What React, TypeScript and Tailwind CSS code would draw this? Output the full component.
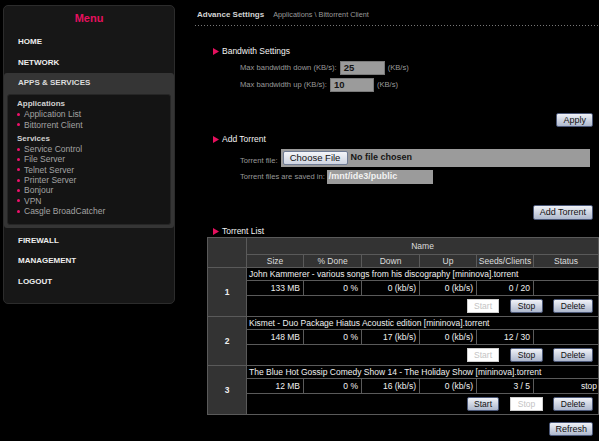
import type { ReactNode } from 'react';

const torrents = [
  {
    id: 1,
    name: 'John Kammerer - various songs from his discography [mininova].torrent',
    size: '133 MB',
    done: '0 %',
    down: '0 (kb/s)',
    up: '0 (kb/s)',
    seeds: '0 / 20',
    status: '',
    canStart: false,
    canStop: true,
  },
  {
    id: 2,
    name: 'Kismet - Duo Package Hiatus Acoustic edition [mininova].torrent',
    size: '148 MB',
    done: '0 %',
    down: '17 (kb/s)',
    up: '0 (kb/s)',
    seeds: '12 / 30',
    status: '',
    canStart: false,
    canStop: true,
  },
  {
    id: 3,
    name: 'The Blue Hot Gossip Comedy Show 14 - The Holiday Show [mininova].torrent',
    size: '12 MB',
    done: '0 %',
    down: '16 (kb/s)',
    up: '0 (kb/s)',
    seeds: '3 / 5',
    status: 'stop',
    canStart: true,
    canStop: false,
  },
];

function MenuLink({ children, tall }: { children: ReactNode; tall?: boolean }) {
  return (
    <div
      className={`${tall ? 'h-[21px]' : 'h-[20.5px]'} flex items-center pl-[14px] text-[8px] font-bold text-[#eeeeee]`}
    >
      {children}
    </div>
  );
}

function SubItem({ children }: { children: ReactNode }) {
  return (
    <div className="flex items-center text-[8.5px] text-[#a3a3a3]">
      <span className="mr-[4px] h-[3px] w-[3px] rounded-full bg-[#f0106a]" />
      {children}
    </div>
  );
}

function Sidebar() {
  return (
    <div className="flex h-[299px] w-[172px] flex-col rounded-[5px] border border-[#2c2c2c] bg-[#171717]">
      <div className="flex h-[25px] items-center justify-center text-[11px] font-bold text-[#e6105e]">Menu</div>
      <MenuLink tall>HOME</MenuLink>
      <MenuLink tall>NETWORK</MenuLink>
      <div className="rounded-[3px] bg-[#353535] pb-[3px]">
        <div className="flex h-[20px] items-center pl-[14px] text-[8px] font-bold text-[#dddddd]">
          APPS &amp; SERVICES
        </div>
        <div className="mx-[3px] mt-[1px] rounded-[3px] border border-[#262626] bg-[#141414] pb-[8px] pl-[9px] pt-[4px] leading-[10.3px]">
          <div className="text-[8px] font-bold text-[#d0d0d0]">Applications</div>
          <SubItem>Application List</SubItem>
          <SubItem>Bittorrent Client</SubItem>
          <div className="mt-[4px] text-[8px] font-bold text-[#d0d0d0]">Services</div>
          <SubItem>Service Control</SubItem>
          <SubItem>File Server</SubItem>
          <SubItem>Telnet Server</SubItem>
          <SubItem>Printer Server</SubItem>
          <SubItem>Bonjour</SubItem>
          <SubItem>VPN</SubItem>
          <SubItem>Casgle BroadCatcher</SubItem>
        </div>
      </div>
      <div className="pt-[2px]">
        <MenuLink>FIREWALL</MenuLink>
        <MenuLink>MANAGEMENT</MenuLink>
        <MenuLink>LOGOUT</MenuLink>
      </div>
    </div>
  );
}

function Heading({ children }: { children: ReactNode }) {
  return (
    <div className="flex h-[12px] items-center pl-[18px] text-[8.5px] text-[#f2f2f2]">
      <svg width="6" height="7" viewBox="0 0 6 7" className="mr-[3px]">
        <polygon points="0,0 6,3.5 0,7" fill="#e6105e" />
      </svg>
      {children}
    </div>
  );
}

function Button({ children, disabled, w }: { children: ReactNode; disabled?: boolean; w: string }) {
  if (disabled) {
    return (
      <div
        className={`${w} flex h-[14px] items-center justify-center border border-[#cfcfcf] bg-white text-[8.5px] text-[#c4c4c4]`}
      >
        {children}
      </div>
    );
  }
  return (
    <div
      className={`${w} flex h-[14px] items-center justify-center rounded-[2px] border border-[#4b5878] bg-linear-to-b from-[#f0f2f7] to-[#aeb8cd] text-[8.5px] text-[#111111]`}
    >
      {children}
    </div>
  );
}

function Field({ value, w }: { value: string; w: string }) {
  return (
    <div
      className={`${w} ml-[3px] flex h-[14px] items-center border border-[#7a7a7a] bg-[#9b9b9b] pl-[3px] text-[9.5px] font-bold text-[#151515]`}
    >
      {value}
    </div>
  );
}

const cell = 'border border-[#5a5a5a]';
const head = 'border border-[#5a5a5a] bg-[#333333] text-center text-[#dddddd]';

function TorrentTable() {
  return (
    <table className="w-[391px] table-fixed border-collapse text-[8.5px] leading-none text-[#f0f0f0]">
      <colgroup>
        <col className="w-[39px]" />
        <col className="w-[57px]" />
        <col className="w-[58px]" />
        <col className="w-[58px]" />
        <col className="w-[57px]" />
        <col className="w-[57px]" />
        <col className="w-[65px]" />
      </colgroup>
      <tbody>
        <tr className="h-[17px]">
          <td rowSpan={2} className={head} />
          <td colSpan={6} className={head}>
            Name
          </td>
        </tr>
        <tr className="h-[13px]">
          <td className={head}>Size</td>
          <td className={head}>% Done</td>
          <td className={head}>Down</td>
          <td className={head}>Up</td>
          <td className={head}>Seeds/Clients</td>
          <td className={head}>Status</td>
        </tr>
        {torrents.map((t) => (
          <TorrentRows key={t.id} t={t} />
        ))}
      </tbody>
    </table>
  );
}

function TorrentRows({ t }: { t: (typeof torrents)[number] }) {
  return (
    <>
      <tr className="h-[13px]">
        <td rowSpan={3} className={`${cell} bg-[#333333] text-center font-bold`}>
          {t.id}
        </td>
        <td colSpan={6} className={`${cell} whitespace-nowrap pl-[2px]`}>
          {t.name}
        </td>
      </tr>
      <tr className="h-[15px]">
        <td className={`${cell} pr-[3px] text-right`}>{t.size}</td>
        <td className={`${cell} pr-[3px] text-right`}>{t.done}</td>
        <td className={`${cell} pr-[3px] text-right`}>{t.down}</td>
        <td className={`${cell} pr-[3px] text-right`}>{t.up}</td>
        <td className={`${cell} pr-[3px] text-right`}>{t.seeds}</td>
        <td className={`${cell} pr-[1px] text-right`}>{t.status}</td>
      </tr>
      <tr className="h-[21px]">
        <td colSpan={6} className={`${cell} pr-[5px]`}>
          <div className="flex justify-end">
            <Button w="w-[32px]" disabled={!t.canStart}>
              Start
            </Button>
            <div className="ml-[11px]">
              <Button w="w-[33px]" disabled={!t.canStop}>
                Stop
              </Button>
            </div>
            <div className="ml-[10px]">
              <Button w="w-[40px]">Delete</Button>
            </div>
          </div>
        </td>
      </tr>
    </>
  );
}

export default function App() {
  return (
    <div className="flex h-[441px] w-[599px] overflow-hidden bg-black font-['Liberation_Sans',Arial,sans-serif]">
      <div className="pl-[3px] pt-[5px]">
        <Sidebar />
      </div>
      <div className="ml-[20px] w-[404px]">
        <div className="flex h-[25px] items-center pl-[2px] pt-[5px]">
          <span className="text-[8px] font-bold text-[#d4d4d4]">Advance Settings</span>
          <span className="ml-[9px] text-[7.3px] text-[#9a9a9a]">Applications \ Bittorrent Client</span>
        </div>
        <div className="h-px bg-[linear-gradient(to_right,#777777_1px,transparent_1px)] bg-[length:3px_1px] bg-repeat-x" />

        <div className="mt-[19px]">
          <Heading>Bandwith Settings</Heading>
        </div>
        <div className="mt-[4px] flex h-[14px] items-center pl-[45px] text-[7.6px] text-[#9a9a9a]">
          <span>Max bandwidth down (KB/s):</span>
          <Field value="25" w="w-[45px]" />
          <span className="ml-[3px]">(KB/s)</span>
        </div>
        <div className="mt-[3px] flex h-[14px] items-center pl-[45px] text-[7.6px] text-[#9a9a9a]">
          <span>Max bandwidth up (KB/s):</span>
          <Field value="10" w="w-[44px]" />
          <span className="ml-[3px]">(KB/s)</span>
        </div>
        <div className="mt-[21px] flex justify-end pr-[6px]">
          <div className="rounded-[2px] border border-[#4b5878] bg-linear-to-b from-[#f0f2f7] to-[#aeb8cd] px-[6px] text-[9px] leading-[12px] text-[#111111]">
            Apply
          </div>
        </div>

        <div className="mt-[6px]">
          <Heading>Add Torrent</Heading>
        </div>
        <div className="mt-[4px] flex items-end pl-[45px] text-[7.6px] text-[#9a9a9a]">
          <span className="pb-[1px]">Torrent file:</span>
          <div className="ml-[3px] flex h-[18px] w-[309px] items-center bg-[#9b9b9b] pl-[2px]">
            <div className="flex h-[14px] w-[65px] items-center justify-center rounded-[2px] border border-[#6f7b94] bg-linear-to-b from-[#f4f5f9] to-[#cfd5e2] text-[9.5px] text-[#111111]">
              Choose File
            </div>
            <span className="ml-[3px] text-[9px] font-bold text-[#151515]">No file chosen</span>
          </div>
        </div>
        <div className="mt-[3px] flex h-[14px] items-center pl-[45px] text-[7.6px] text-[#9a9a9a]">
          <span>Torrent files are saved in:</span>
          <div className="ml-[2px] flex h-[14px] w-[106px] items-center bg-[#9b9b9b] pl-[2px] text-[9px] font-bold text-[#f2f2f2]">
            /mnt/ide3/public
          </div>
        </div>
        <div className="mt-[21px] flex justify-end pr-[6px]">
          <div className="rounded-[2px] border border-[#4b5878] bg-linear-to-b from-[#f0f2f7] to-[#aeb8cd] px-[6px] text-[9px] leading-[13px] text-[#111111]">
            Add Torrent
          </div>
        </div>

        <div className="mt-[5px]">
          <Heading>Torrent List</Heading>
        </div>
        <div className="pl-[12px]">
          <TorrentTable />
        </div>
        <div className="mt-[7px] flex justify-end pr-[6px]">
          <div className="rounded-[2px] border border-[#4b5878] bg-linear-to-b from-[#f0f2f7] to-[#aeb8cd] px-[5px] text-[9px] leading-[12px] text-[#111111]">
            Refresh
          </div>
        </div>
      </div>
    </div>
  );
}
